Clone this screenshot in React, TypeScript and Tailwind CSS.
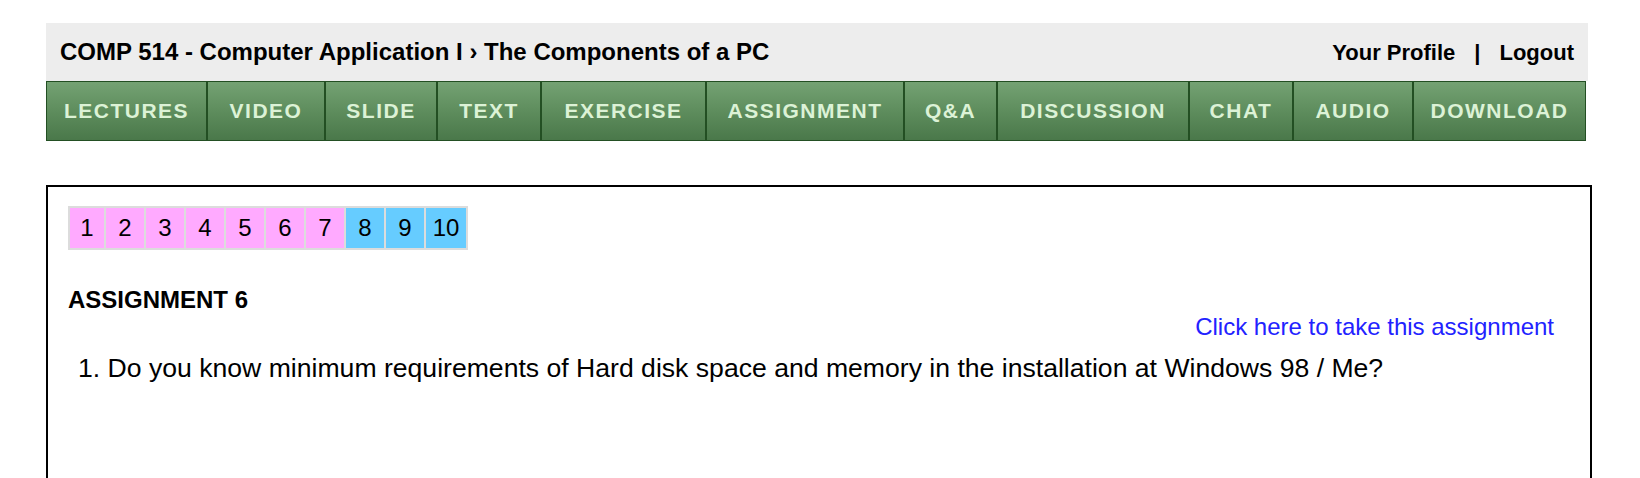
import React from "react";

const tabs = [
  { label: "LECTURES", w: "w-[161px]" },
  { label: "VIDEO", w: "w-[118px]" },
  { label: "SLIDE", w: "w-[112px]" },
  { label: "TEXT", w: "w-[104px]" },
  { label: "EXERCISE", w: "w-[165px]" },
  { label: "ASSIGNMENT", w: "w-[198px]" },
  { label: "Q&A", w: "w-[93px]" },
  { label: "DISCUSSION", w: "w-[192px]" },
  { label: "CHAT", w: "w-[104px]" },
  { label: "AUDIO", w: "w-[120px]" },
  { label: "DOWNLOAD", w: "w-[173px]" },
];

const pages = [
  { n: 1, w: "w-[34px]", bg: "bg-[#ffaaff]" },
  { n: 2, w: "w-[38px]", bg: "bg-[#ffaaff]" },
  { n: 3, w: "w-[38px]", bg: "bg-[#ffaaff]" },
  { n: 4, w: "w-[38px]", bg: "bg-[#ffaaff]" },
  { n: 5, w: "w-[38px]", bg: "bg-[#ffaaff]" },
  { n: 6, w: "w-[38px]", bg: "bg-[#ffaaff]" },
  { n: 7, w: "w-[38px]", bg: "bg-[#ffaaff]" },
  { n: 8, w: "w-[38px]", bg: "bg-[#66ccff]" },
  { n: 9, w: "w-[38px]", bg: "bg-[#66ccff]" },
  { n: 10, w: "w-[40px]", bg: "bg-[#66ccff]" },
];

export default function App() {
  return (
    <div className="h-[478px] bg-white pt-[23px] pl-[46px] font-['Liberation_Sans',Arial,sans-serif] text-black overflow-hidden">
      <div className="w-[1542px]">
        <div className="h-[58px] bg-[#ededed] flex items-center justify-between px-[14px]">
          <div className="text-[24px] font-bold">COMP 514 - Computer Application I › The Components of a PC</div>
          <div className="text-[22px] font-bold flex items-center gap-[19px]">
            <a>Your Profile</a>
            <span>|</span>
            <a>Logout</a>
          </div>
        </div>
        <nav className="flex h-[60px]">
          {tabs.map((t) => (
            <div
              key={t.label}
              className={`${t.w} h-full flex items-center justify-center border border-[#234f23] bg-gradient-to-b from-[#74a273] via-[#5e8d5d] to-[#4a784a] text-[21px] font-bold tracking-[1.5px] text-[#dcf2d6]`}
            >
              {t.label}
            </div>
          ))}
        </nav>
      </div>

      <div className="mt-[44px] w-[1546px] h-[400px] border-2 border-black pl-[20px] pr-[36px] pt-[19px]">
        <div className="inline-flex gap-[2px] p-[2px] bg-[#dcdcdc]">
          {pages.map((p) => (
            <div key={p.n} className={`${p.w} h-[40px] ${p.bg} flex items-center justify-center text-[24px]`}>
              {p.n}
            </div>
          ))}
        </div>
        <div className="mt-[38px] text-[24px] font-bold leading-none">ASSIGNMENT 6</div>
        <div className="flex justify-end mt-[3px]">
          <a className="text-[24px] leading-none text-[#2222ff]">Click here to take this assignment</a>
        </div>
        <div className="mt-[16px] pl-[10px] text-[26.6px] leading-none">
          1. Do you know minimum requirements of Hard disk space and memory in the installation at Windows 98 / Me?
        </div>
      </div>
    </div>
  );
}
